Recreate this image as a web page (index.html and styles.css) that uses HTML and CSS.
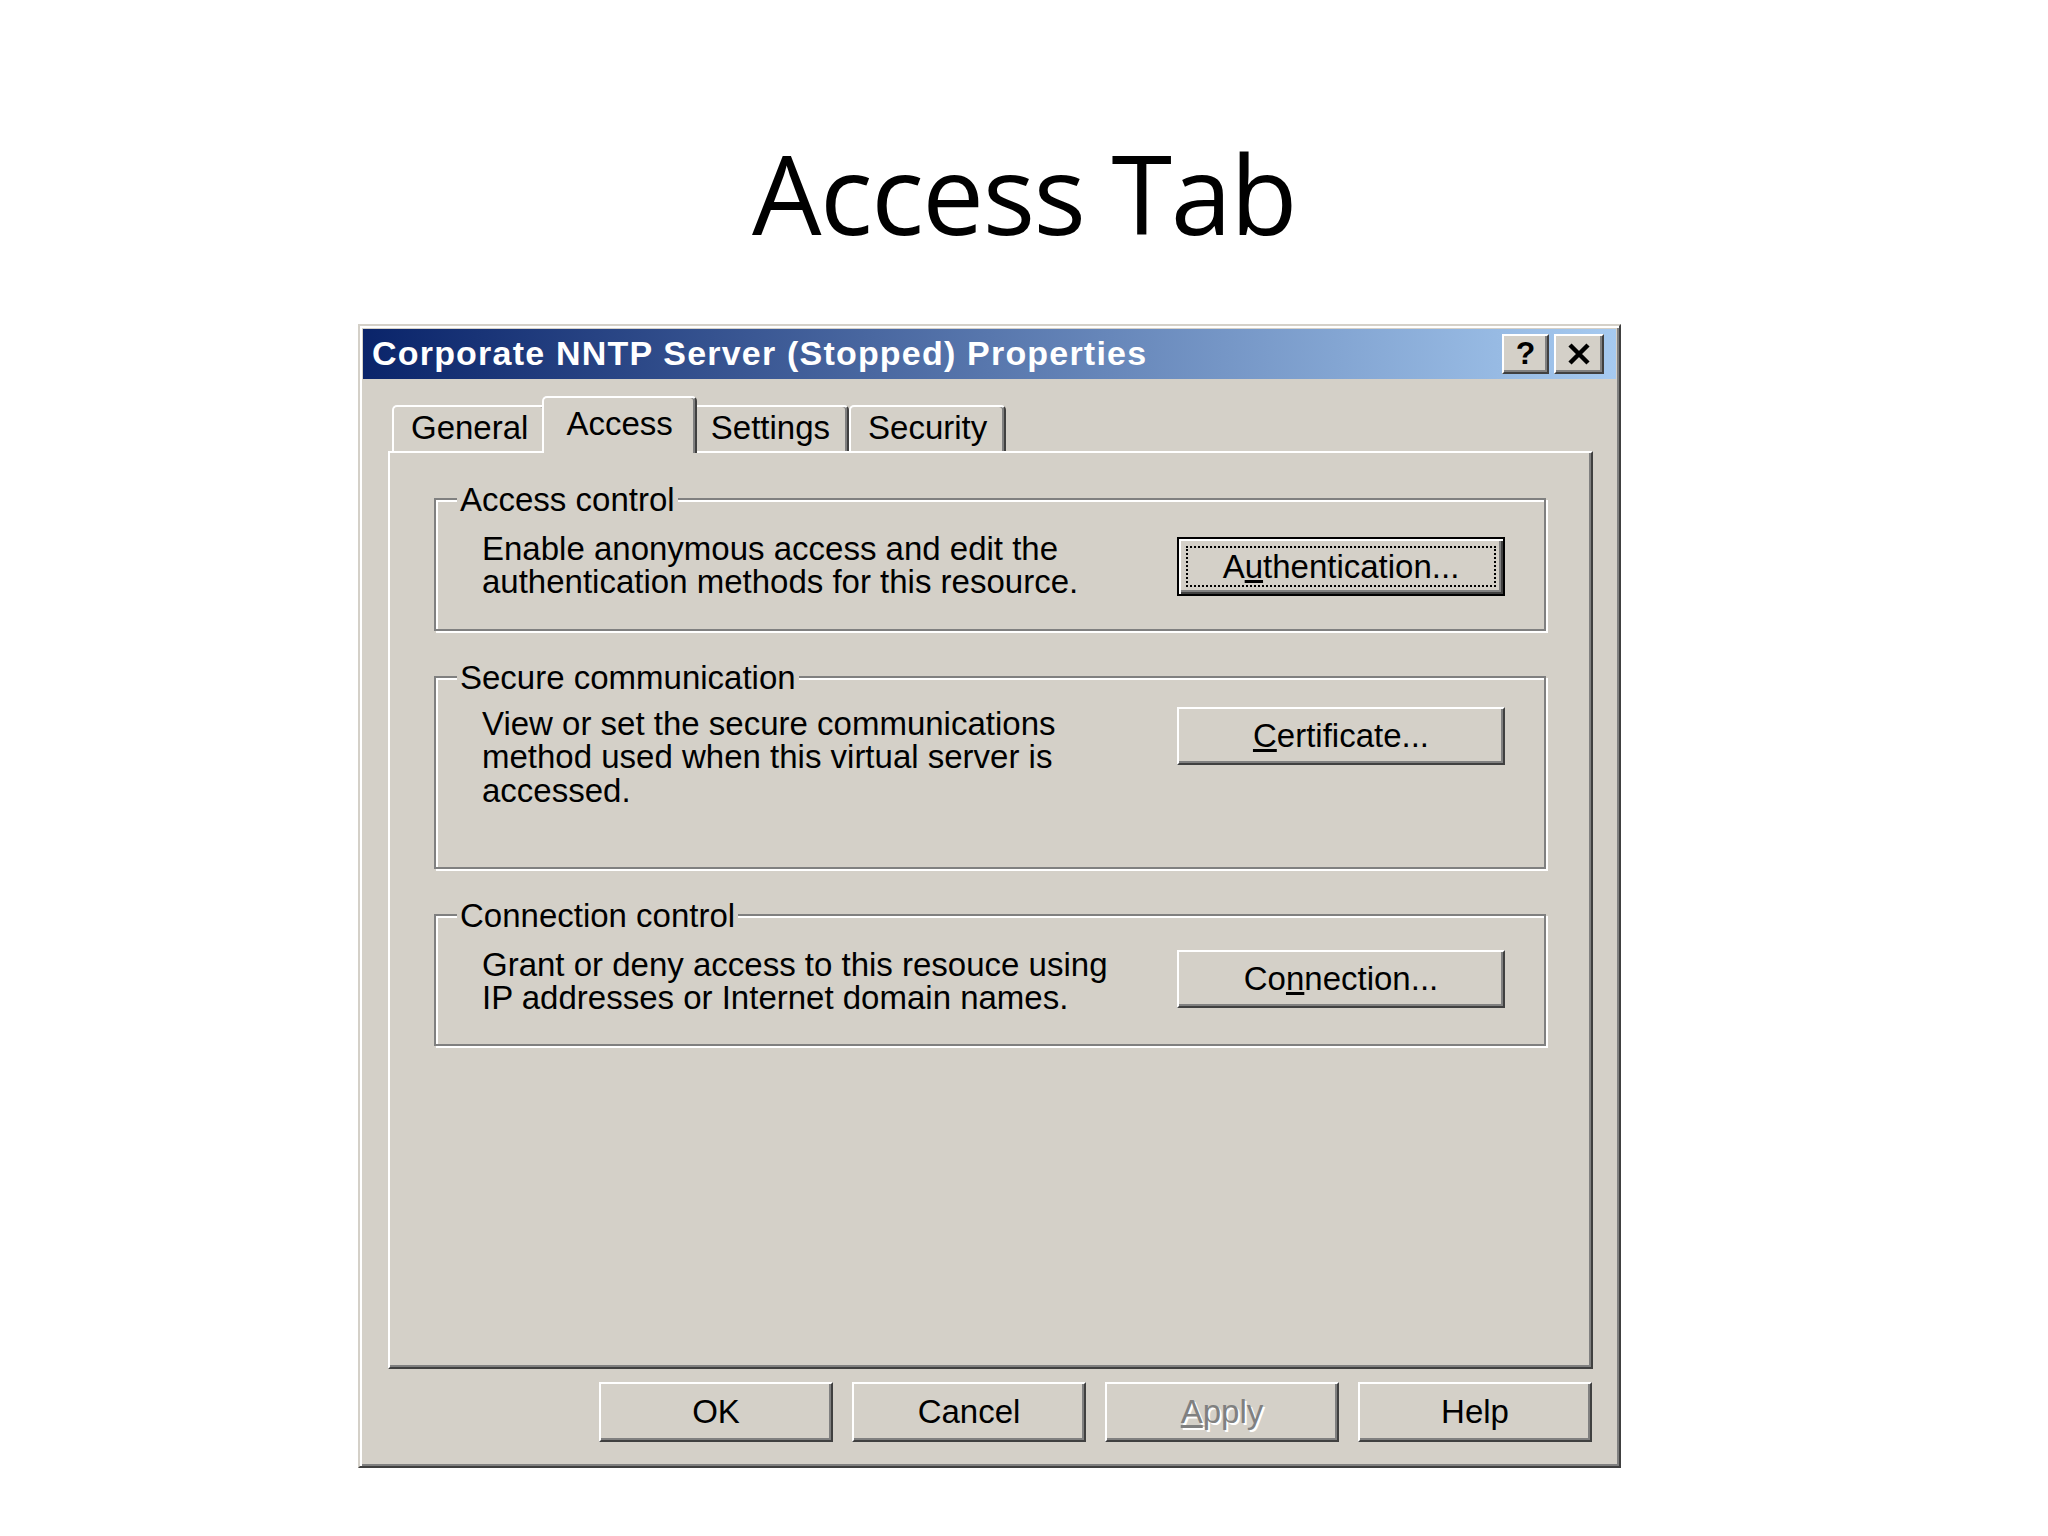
FILE: index.html
```html
<!DOCTYPE html>
<html lang="en">
  <head>
    <meta charset="utf-8">
    <title>Access Tab</title>
    <link rel="stylesheet" href="styles.css">
  </head>
  <body>

  <h1 class="slide-title">Access Tab</h1>

  <div class="dialog">
    <div class="titlebar">
      <span class="caption">Corporate NNTP Server (Stopped) Properties</span>
      <div class="caption-buttons">
        <span class="cap-btn help">?</span>
        <span class="cap-btn close">
          <svg width="24" height="22" viewBox="0 0 24 22"><path d="M3 2 L21 20 M21 2 L3 20" stroke="#000" stroke-width="4.5" fill="none"/></svg>
        </span>
      </div>
    </div>

    <div class="tabs">
      <span class="tab">General</span>
      <span class="tab active">Access</span>
      <span class="tab">Settings</span>
      <span class="tab">Security</span>
    </div>

    <div class="panel">
      <div class="group g-access">
        <span class="group-title">Access control</span>
        <div class="group-row">
          <p class="group-text">Enable anonymous access and edit the<br>authentication methods for this resource.</p>
          <button class="btn default"><span class="focus">A<u>u</u>thentication...</span></button>
        </div>
      </div>

      <div class="group g-secure">
        <span class="group-title">Secure communication</span>
        <div class="group-row">
          <p class="group-text">View or set the secure communications<br>method used when this virtual server is<br>accessed.</p>
          <button class="btn"><u>C</u>ertificate...</button>
        </div>
      </div>

      <div class="group g-conn">
        <span class="group-title">Connection control</span>
        <div class="group-row">
          <p class="group-text">Grant or deny access to this resouce using<br>IP addresses or Internet domain names.</p>
          <button class="btn">Co<u>n</u>nection...</button>
        </div>
      </div>
    </div>

    <div class="footer">
      <button class="btn wide">OK</button>
      <button class="btn wide">Cancel</button>
      <button class="btn wide disabled"><u>A</u>pply</button>
      <button class="btn wide">Help</button>
    </div>
  </div>

  </body>
</html>
```

FILE: styles.css
```css
html {
  height: 100%;
}
body {
  margin: 0;
  padding: 0;
  background: #ffffff;
  color: #000000;
  font-family: "Liberation Sans", Arial, sans-serif;
}

.slide-title {
  margin: 127px 0 67px;
  font: 400 110px/130px "Open Sans", sans-serif;
  letter-spacing: -1.5px;
  text-align: center;
}

/* window frame */
.dialog {
  box-sizing: border-box;
  width: 1263px;
  height: 1144px;
  margin-left: 358px;
  padding: 3px;
  display: flex;
  flex-direction: column;
  background: #d4d0c8;
  border: 2px solid;
  border-color: #d4d0c8 #404040 #404040 #d4d0c8;
  box-shadow: inset 2px 2px 0 #fff, inset -2px -2px 0 #808080;
  font-size: 33px;
  line-height: 33.5px;
}

.titlebar {
  height: 50px;
  display: flex;
  align-items: center;
  justify-content: space-between;
  padding: 0 12px 0 9px;
  background: linear-gradient(to right, #0a246a, #a6caf0);
}
.caption {
  color: #fff;
  font-weight: bold;
  font-size: 34px;
  letter-spacing: 1.2px;
  white-space: nowrap;
}
.caption-buttons {
  display: flex;
  gap: 5px;
}
.cap-btn {
  box-sizing: border-box;
  height: 40px;
  display: flex;
  align-items: center;
  justify-content: center;
  background: #d4d0c8;
  border: 2px solid;
  border-color: #fff #404040 #404040 #fff;
  box-shadow: inset -2px -2px 0 #808080;
}
.cap-btn.help {
  width: 47px;
  font-weight: bold;
  font-size: 32px;
}
.cap-btn.close {
  width: 50px;
}

/* tabs */
.tabs {
  height: 55px;
  display: flex;
  align-items: flex-end;
  margin: 17px 0 0 25px;
  padding-left: 4px;
}
.tab {
  box-sizing: border-box;
  height: 46px;
  padding: 4px 17px 0;
  background: #d4d0c8;
  border: 2px solid;
  border-bottom: 0;
  border-color: #fff #404040 transparent #fff;
  border-radius: 5px 5px 0 0;
  box-shadow: inset -2px 0 0 #808080;
  white-space: nowrap;
}
.tab.active {
  position: relative;
  z-index: 1;
  height: 57px;
  padding: 9px 22px 0;
  margin: 0 -5px -2px;
}

.panel {
  box-sizing: border-box;
  height: 918px;
  margin: 0 23px 0 25px;
  padding: 45px 45px 0 44px;
  display: flex;
  flex-direction: column;
  gap: 45px;
  border: 2px solid;
  border-color: #fff #404040 #404040 #fff;
  box-shadow: inset -2px -2px 0 #808080;
}

/* group boxes */
.group {
  box-sizing: border-box;
  display: flex;
  flex-direction: column;
  padding: 0 39px 0 46px;
  border: 2px solid #808080;
  box-shadow: 2px 2px 0 #fff, inset 2px 2px 0 #fff;
}
.g-access { height: 133px; }
.g-secure { height: 193px; }
.g-conn { height: 132px; }

.group-title {
  align-self: flex-start;
  margin: -17px 0 0 -25px;
  padding: 0 3px;
  background: #d4d0c8;
  white-space: nowrap;
}
.group-row {
  display: flex;
  justify-content: space-between;
  align-items: flex-start;
  margin-top: 15px;
}
.g-secure .group-row {
  margin-top: 12px;
}
.group-text {
  margin: 0;
  white-space: nowrap;
}

/* push buttons */
.btn {
  box-sizing: border-box;
  width: 328px;
  height: 58px;
  padding: 0;
  font: inherit;
  color: #000;
  background: #d4d0c8;
  border: 2px solid;
  border-color: #fff #404040 #404040 #fff;
  box-shadow: inset -2px -2px 0 #808080;
}
.group-row .btn {
  margin-top: 2px;
}
.g-secure .group-row .btn {
  margin-top: 0;
}
.btn.default {
  height: 59px;
  margin-top: 5px;
  padding: 7px;
  border: 2px solid #000;
  box-shadow: inset 2px 2px 0 #fff, inset -2px -2px 0 #404040, inset -4px -4px 0 #808080;
}
.focus {
  display: block;
  box-sizing: border-box;
  height: 100%;
  line-height: 37px;
  border: 2px dotted #000;
}
.btn.wide {
  width: 234px;
  height: 60px;
}
.btn.disabled {
  color: #808080;
  text-shadow: 2px 2px 0 #fff;
}

.footer {
  display: flex;
  justify-content: flex-end;
  gap: 19px;
  margin-top: 13px;
  padding-right: 24px;
}
```
